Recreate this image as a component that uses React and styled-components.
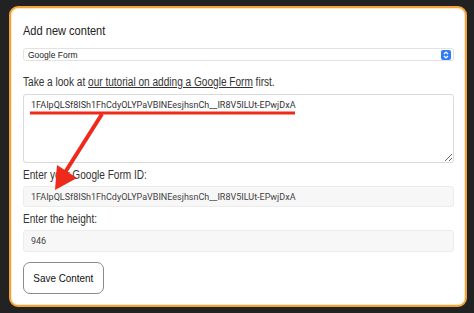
import React from 'react';
import styled, { createGlobalStyle } from 'styled-components';

const GlobalStyle = createGlobalStyle`
  * { box-sizing: border-box; }
  html, body {
    margin: 0;
    padding: 0;
    background: #222222;
    font-family: "Liberation Sans", Arial, sans-serif;
  }
`;

const Page = styled.div`
  position: relative;
  width: 474px;
  height: 313px;
  padding: 6px 7px 6px 9px;
  background: #222222;
`;

const Card = styled.div`
  height: 301px;
  background: #ffffff;
  border: 2px solid #f2a23a;
  border-radius: 9px;
  box-shadow: inset 0 0 0 1px #fde9c8;
  padding: 15px 11px 11px 12px;
  display: flex;
  flex-direction: column;
`;

/* the source shot is squeezed sideways, so text is narrowed to match */
const Title = styled.h2`
  margin: 0;
  font-size: 13px;
  line-height: 16px;
  font-weight: 400;
  color: #222;
  white-space: nowrap;
  transform: scaleX(0.85);
  transform-origin: left center;
`;

const SelectBox = styled.div`
  margin-top: 9px;
  height: 13px;
  border: 1px solid #e2e2e2;
  border-radius: 3px;
  background: #fff;
  display: flex;
  align-items: center;
  justify-content: space-between;
  padding: 0 2px 0 4px;
  font-size: 8.5px;
  color: #222;
`;

const SelectIcon = styled.span`
  width: 10px;
  height: 10px;
  border-radius: 2px;
  background: #2f7df6;
  display: flex;
  align-items: center;
  justify-content: center;
`;

const Label = styled.p`
  margin: ${(p) => p.$top || 4}px 0 0;
  font-size: 12.3px;
  line-height: 16px;
  color: #333;
  white-space: nowrap;
  transform: scaleX(0.82);
  transform-origin: left center;
`;

const Link = styled.span`
  text-decoration: underline;
  color: #333;
`;

const TextArea = styled.textarea`
  margin-top: 4px;
  height: 69px;
  width: 100%;
  appearance: none;
  border: 1px solid #dadada !important;
  box-shadow: none;
  border-radius: 3px;
  padding: 4px 7px;
  font-family: Roboto, "Liberation Sans", sans-serif;
  font-size: 9px;
  line-height: 12px;
  color: #333;
  background: #fff;
  outline: none;
`;

const Field = styled.input`
  margin-top: 3px;
  height: ${(p) => p.$h || 21}px;
  width: 100%;
  border: 1px solid #ececec;
  border-radius: 3px;
  background: #f7f7f7;
  padding: 0 7px;
  font-family: Roboto, "Liberation Sans", sans-serif;
  font-size: 9px;
  color: #444;
  outline: none;
`;

const SaveButton = styled.button`
  margin-top: 10px;
  align-self: flex-start;
  width: 81px;
  height: 32px;
  border: 1px solid #8a8a8a;
  border-radius: 7px;
  background: #fff;
  font-family: "Liberation Sans", Arial, sans-serif;
  font-size: 11px;
  color: #111;
  padding: 0;
  display: flex;
  align-items: center;
  justify-content: center;

  span {
    display: inline-block;
    transform: scaleX(0.9);
  }
`;

const Overlay = styled.svg`
  position: absolute;
  left: 0;
  top: 0;
  pointer-events: none;
`;

const FORM_ID = '1FAIpQLSf8ISh1FhCdyOLYPaVBINEesjhsnCh__IR8V5ILUt-EPwjDxA';

const App = () => {
  return (
    <Page>
      <GlobalStyle />
      <Card>
        <Title>Add new content</Title>
        <SelectBox>
          <span>Google Form</span>
          <SelectIcon>
            <svg width="6" height="8" viewBox="0 0 6 8">
              <path d="M1 3 L3 1 L5 3 M1 5 L3 7 L5 5" stroke="#fff" strokeWidth="1.2" fill="none" />
            </svg>
          </SelectIcon>
        </SelectBox>
        <Label $top={13}>
          Take a look at <Link>our tutorial on adding a Google Form</Link> first.
        </Label>
        <TextArea defaultValue={FORM_ID} />
        <Label>Enter your Google Form ID:</Label>
        <Field readOnly value={FORM_ID} />
        <Label>Enter the height:</Label>
        <Field readOnly value="946" $h={22} />
        <SaveButton>
          <span>Save Content</span>
        </SaveButton>
      </Card>
      <Overlay width="474" height="313" viewBox="0 0 474 313">
        <line x1="30" y1="113" x2="295" y2="113" stroke="#ee2a1b" strokeWidth="3" />
        <line x1="102" y1="114" x2="64" y2="174" stroke="#ee2a1b" strokeWidth="4" />
        <polygon points="55,190 57,165 77,178" fill="#ee2a1b" />
      </Overlay>
    </Page>
  );
};

export default App;
